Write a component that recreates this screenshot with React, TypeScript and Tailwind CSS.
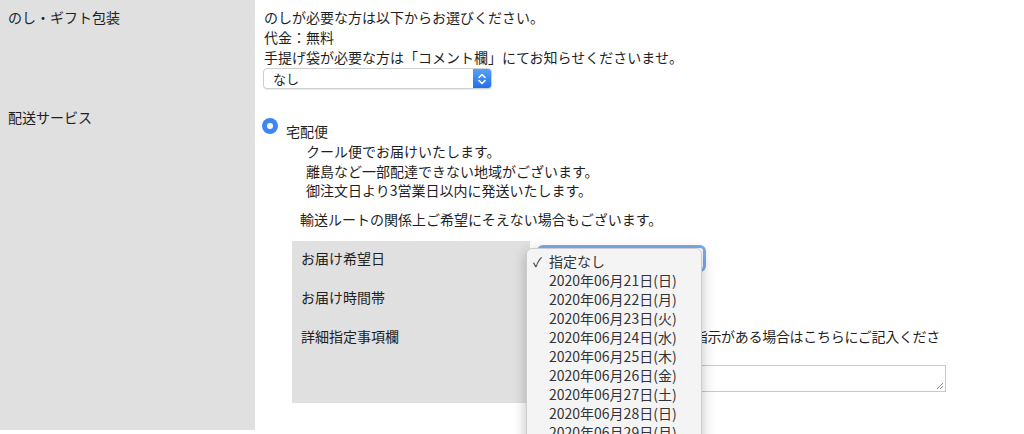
const font = { fontFamily: '"Noto Sans CJK JP", "Noto Sans", sans-serif' }

const dates = [
  '2020年06月21日(日)',
  '2020年06月22日(月)',
  '2020年06月23日(火)',
  '2020年06月24日(水)',
  '2020年06月25日(木)',
  '2020年06月26日(金)',
  '2020年06月27日(土)',
  '2020年06月28日(日)',
  '2020年06月29日(月)',
  '2020年06月30日(火)',
]

function Chevrons() {
  return (
    <svg width="10" height="14" viewBox="0 0 10 14" fill="none" stroke="white" strokeWidth="1.6" strokeLinecap="round" strokeLinejoin="round">
      <path d="M2 5.5 L5 2.5 L8 5.5" />
      <path d="M2 8.5 L5 11.5 L8 8.5" />
    </svg>
  )
}

function Radio() {
  return (
    <span className="w-4 h-4 rounded-full bg-[#3f86f5] flex items-center justify-center shrink-0">
      <span className="w-[6px] h-[6px] rounded-full bg-white" />
    </span>
  )
}

export default function App() {
  return (
    <div className="relative w-[1024px] h-[434px] overflow-hidden bg-white text-[14px] leading-[20px] text-[#1f1f1f]" style={font}>

      {/* のし・ギフト包装 */}
      <div className="flex">
        <div className="w-[255px] shrink-0 bg-[#e0e0e0] px-2 pt-[7px]">のし・ギフト包装</div>
        <div className="pl-[9px] pt-[7px] pb-[11px]">
          <p>のしが必要な方は以下からお選びください。</p>
          <p>代金：無料</p>
          <p>手提げ袋が必要な方は「コメント欄」にてお知らせくださいませ。</p>
          <div className="mt-[1px] -ml-[1px] w-[229px] h-[21px] flex items-stretch rounded-[4px] border border-[#cfcfcf] bg-white shadow-[0_1px_1px_rgba(0,0,0,0.08)] overflow-hidden">
            <span className="flex-1 pl-[9px] text-[13px] leading-[19px]">なし</span>
            <span className="w-[18px] flex items-center justify-center bg-gradient-to-b from-[#57a0fb] to-[#1f6fea]">
              <Chevrons />
            </span>
          </div>
        </div>
      </div>

      {/* 配送サービス */}
      <div className="flex">
        <div className="w-[255px] h-[330px] shrink-0 bg-[#e0e0e0] px-2 pt-[7px]">配送サービス</div>
        <div className="pl-[7px] pt-[18px]">
          <div className="flex items-start gap-2">
            <Radio />
            <span className="mt-[3px]">宅配便</span>
          </div>
          <div className="pl-[44px] mt-[1px] leading-[19.5px]">
            <p>クール便でお届けいたします。</p>
            <p>離島など一部配達できない地域がございます。</p>
            <p>御注文日より3営業日以内に発送いたします。</p>
          </div>
          <p className="pl-[38px] mt-[8px]">輸送ルートの関係上ご希望にそえない場合もございます。</p>

          <div className="ml-[30px] mt-[12px] w-[655px] flex">
            <div className="w-[238px] h-[162px] shrink-0 bg-[#e0e0e0] pl-[9px]">
              <p className="h-[39px] pt-[7px]">お届け希望日</p>
              <p className="h-[39px] pt-[7px]">お届け時間帯</p>
              <p className="h-[39px] pt-[7px]">詳細指定事項欄</p>
            </div>
            <div className="flex-1 pl-[7px]">
              <div className="h-[39px] pt-[4px]">
                <div className="w-[169px] h-[27px] rounded-[6px] border-[3px] border-[#7ea9ee] bg-white" />
              </div>
              <div className="h-[39px] pt-[4px]">
                <div className="w-[158px] h-[24px] rounded-[4px] border border-[#cfcfcf] bg-white" />
              </div>
              <div className="pt-[7px] w-[402px] overflow-hidden whitespace-nowrap">
                <p className="pl-[6px] tracking-[-0.3px]">お届けに関する特別なご指示がある場合はこちらにご記入ください。</p>
              </div>
              <div className="mt-[19px] relative w-[409px] h-[27px] border border-[#c9c9c9] bg-white">
                <svg className="absolute right-[1px] bottom-[1px]" width="8" height="8" viewBox="0 0 8 8" stroke="#8a8a8a" strokeWidth="1">
                  <path d="M7 1 L1 7 M7 4 L4 7" />
                </svg>
              </div>
            </div>
          </div>
        </div>
      </div>

      {/* open date dropdown */}
      <div className="absolute left-[526px] top-[248px] w-[176px] h-[200px] rounded-[6px] border border-[#cdcdcd] bg-[#f4f4f4] shadow-[0_4px_14px_rgba(0,0,0,0.25)] pt-[3px] text-[#333] leading-[19px]">
        <div className="flex items-center pl-[6px]">
          <span className="w-[16px] text-[13px]">✓</span>
          <span>指定なし</span>
        </div>
        {dates.map((d) => (
          <div key={d} className="pl-[22px]">{d}</div>
        ))}
      </div>
    </div>
  )
}
